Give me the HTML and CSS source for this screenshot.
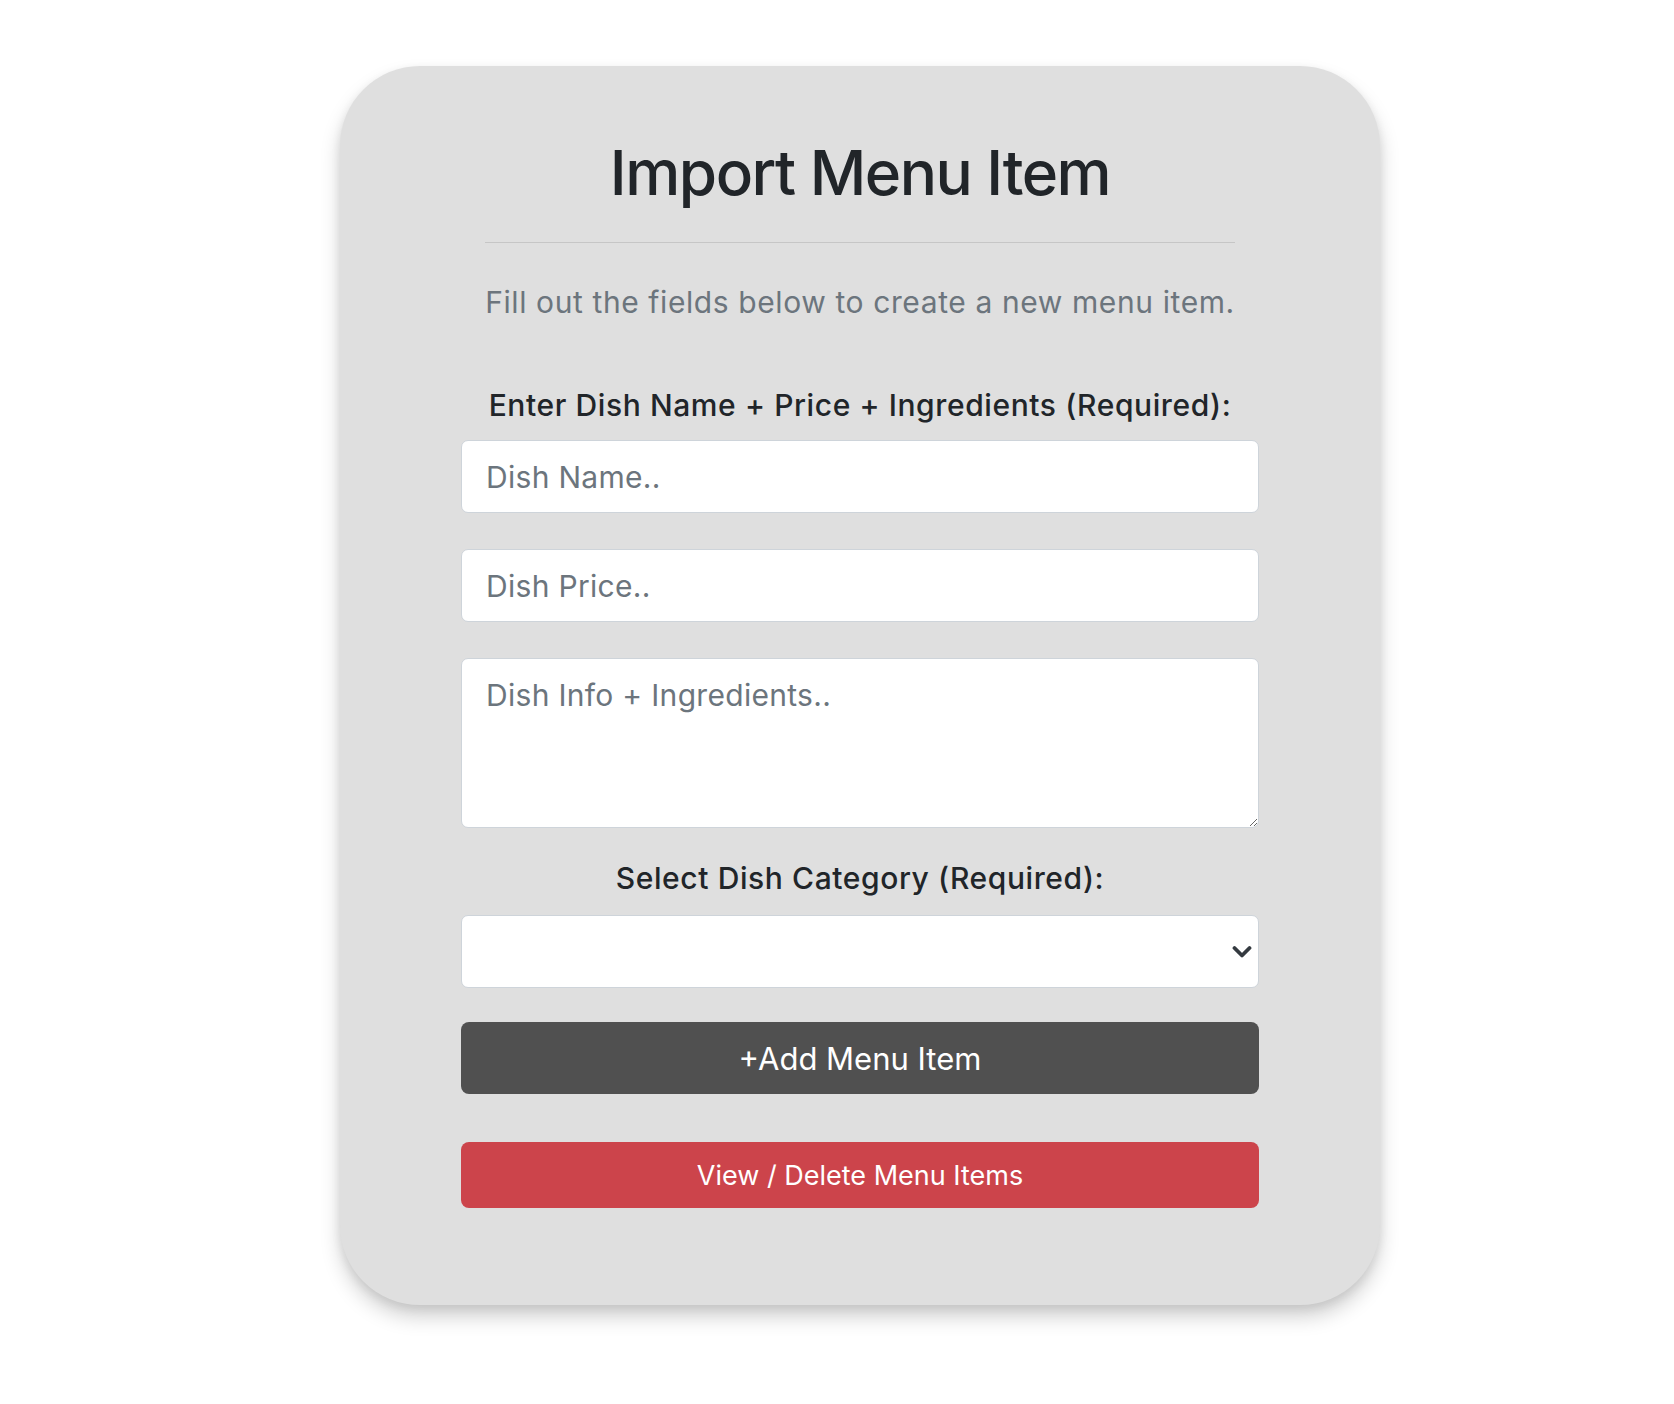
FILE: index.html
```html
<!DOCTYPE html>
<html lang="en">
<head>
<meta charset="utf-8">
<title>Import Menu Item</title>
<link rel="stylesheet" href="styles.css">
</head>
<body>
<main class="card">
  <h1 class="title">Import Menu Item</h1>
  <hr class="rule">
  <p class="lead">Fill out the fields below to create a new menu item.</p>
  <form class="form">
    <label class="label" for="dish-name">Enter Dish Name + Price + Ingredients (Required):</label>
    <input class="field" id="dish-name" type="text" placeholder="Dish Name..">
    <input class="field field-gap" type="text" placeholder="Dish Price..">
    <textarea class="field area field-gap" placeholder="Dish Info + Ingredients.."></textarea>
    <label class="label label-second" for="dish-cat">Select Dish Category (Required):</label>
    <div class="select-wrap">
      <select class="field select" id="dish-cat"><option></option></select>
      <svg class="chevron" width="20" height="14" viewBox="0 0 20 14" aria-hidden="true"><path d="M2.5 3 L10 10.5 L17.5 3" fill="none" stroke="#343a40" stroke-width="3.8" stroke-linecap="round" stroke-linejoin="round"/></svg>
    </div>
    <button class="btn btn-dark" type="button">+Add Menu Item</button>
    <button class="btn btn-red" type="button">View / Delete Menu Items</button>
  </form>
</main>
</body>
</html>
```

FILE: styles.css
```css
* { box-sizing: border-box; }
html, body { margin: 0; padding: 0; background: #ffffff; }
body {
  font-family: Inter, "Noto Sans", "Liberation Sans", sans-serif;
  color: #212529;
}
.card {
  width: 1040px;
  height: 1239px;
  margin: 66px 0 40px 340px;
  padding: 69px 121px 0;
  background: #dfdfdf;
  border-radius: 80px;
  box-shadow: 0 12px 20px rgba(0, 0, 0, 0.18), 0 4px 10px rgba(0, 0, 0, 0.08);
}
.title {
  margin: 0;
  font-size: 62px;
  line-height: 76px;
  font-weight: 500;
  text-align: center;
  letter-spacing: -1.5px;
}
.rule {
  width: 750px;
  margin: 31px auto 0;
  border: 0;
  border-top: 1.5px solid #c6c6c6;
  height: 0;
}
.lead {
  margin: 39px 0 0;
  font-size: 30px;
  line-height: 40px;
  letter-spacing: 0.6px;
  color: #6c757d;
  text-align: center;
}
.form { display: flex; flex-direction: column; }
.label {
  display: block;
  margin-top: 65px;
  margin-bottom: 17px;
  font-size: 30px;
  line-height: 36px;
  font-weight: 500;
  letter-spacing: 0.6px;
  text-align: center;
}
.label-second { margin-top: 32px; margin-bottom: 19px; }
.field {
  width: 100%;
  height: 73px;
  padding: 0 24px;
  border: 1.5px solid #ced4da;
  border-radius: 7px;
  background: #ffffff;
  font-family: inherit;
  font-size: 30px;
  letter-spacing: 0.3px;
  color: #495057;
  outline: none;
}
.field::placeholder { color: #6c757d; opacity: 1; }
.field-gap { margin-top: 36px; }
.area {
  height: 170px;
  padding-top: 14px;
  line-height: 45px;
  resize: vertical;
}
.select-wrap { position: relative; }
.select { appearance: none; -webkit-appearance: none; }
.chevron {
  position: absolute;
  right: 7px;
  top: 30px;
  pointer-events: none;
}
.btn {
  width: 100%;
  border: 0;
  border-radius: 8px;
  color: #ffffff;
  font-family: inherit;
  cursor: pointer;
}
.btn-dark {
  margin-top: 34px;
  height: 72px;
  background: #505050;
  font-size: 31px;
}
.btn-red {
  margin-top: 48px;
  height: 66px;
  background: #cc444b;
  font-size: 27px;
}
```
